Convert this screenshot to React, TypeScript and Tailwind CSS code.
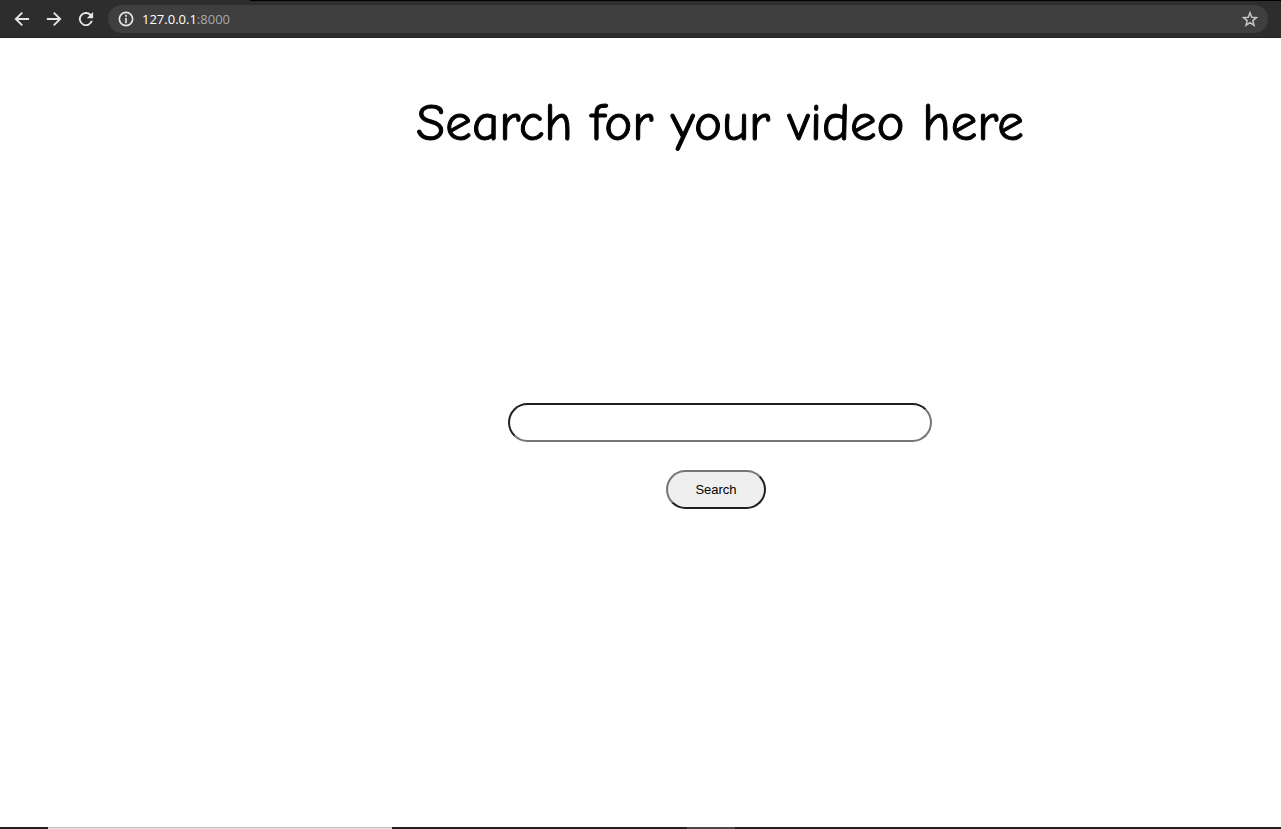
import { useState } from "react";
import type { ReactNode } from "react";

function Icon({ children }: { children: ReactNode }) {
  return (
    <svg viewBox="0 0 24 24" className="size-5" fill="currentColor" aria-hidden="true">
      {children}
    </svg>
  );
}

function BrowserBar() {
  const [address, setAddress] = useState("");
  return (
    <header className="bg-[#2d2d2d] text-[#e6e6e6]">
      <div className="flex h-px bg-black">
        <div className="w-[250px] bg-[#2d2d2d]" />
      </div>
      <div className="flex h-[37px] items-center border-b border-[#232323] pr-[13px] pl-3">
        <nav className="flex gap-3">
          <button type="button" aria-label="Back">
            <Icon>
              <path d="M20.5 10.9H7.4l5.7-5.7L11.5 3.5 3 12l8.500 8.500 1.600-1.700-5.700-5.700H20.500z" />
            </Icon>
          </button>
          <button type="button" aria-label="Forward">
            <Icon>
              <path d="M3.500 10.900H16.600l-5.700-5.700L12.500 3.500 21 12l-8.500 8.500-1.600-1.700 5.700-5.700H3.500z" />
            </Icon>
          </button>
          <button type="button" aria-label="Reload">
            <Icon>
              <path d="M18 6A8.500 8.500 0 1 0 20.200 14.200H17.800A6.200 6.200 0 1 1 16.300 7.700L13 11H20.500V3.500z" />
            </Icon>
          </button>
        </nav>
        <div className="ml-3 flex h-7 flex-1 items-center rounded-full bg-[#3f3f3f] px-2">
          <button type="button" aria-label="Site information">
            <Icon>
              <path d="M11 10.800h2v6.200h-2zM11 7h2v2.200h-2z" />
              <circle cx="12" cy="12" r="8" fill="none" stroke="currentColor" strokeWidth="2" />
            </Icon>
          </button>
          <label className="relative ml-1.5 flex flex-1 items-center font-['Open_Sans','Noto_Sans',sans-serif] text-[13px] leading-5">
            {address === "" && (
              <span className="pointer-events-none absolute left-0 text-[#a8a8a8]">
                <span className="text-white">127.0.0.1</span>:8000
              </span>
            )}
            <input
              type="text"
              aria-label="Address"
              value={address}
              onChange={(event) => setAddress(event.target.value)}
              className="w-full bg-transparent text-white outline-none"
            />
          </label>
          <button type="button" aria-label="Bookmark this page" className="text-[#c4c4c4]">
            <Icon>
              <path
                d="M12 4.500l2.100 5.300 5.700.4-4.400 3.700 1.400 5.600-4.800-3.100-4.800 3.100 1.400-5.600-4.400-3.700 5.700-.4z"
                fill="none"
                stroke="currentColor"
                strokeWidth="1.800"
              />
            </Icon>
          </button>
        </div>
      </div>
    </header>
  );
}

export default function App() {
  return (
    <div className="flex min-h-screen flex-col bg-white">
      <BrowserBar />
      <main className="flex flex-1 flex-col items-center pt-12 pl-[159px]">
        <h1 className="text-center font-['Comic_Sans_MS','Comic_Neue',cursive] text-[53px] leading-[74px] font-normal text-black [-webkit-text-stroke:1px_black]">
          Search for your video here
        </h1>
        <form
          onSubmit={(event) => event.preventDefault()}
          className="mt-[243px] flex flex-col items-center gap-7"
        >
          <input
            type="search"
            aria-label="Search for your video"
            className="h-[39px] w-[424px] appearance-none rounded-[20px] border-2 border-t-[#202020] border-r-[#767676] border-b-[#767676] border-l-[#202020] bg-white px-4 text-sm outline-none"
          />
          <button
            type="submit"
            className="mr-2 h-[39px] w-[100px] rounded-[20px] border-2 border-t-[#767676] border-r-[#202020] border-b-[#202020] border-l-[#767676] bg-[#efefef] font-['Liberation_Sans',sans-serif] text-[13px] text-black"
          >
            Search
          </button>
        </form>
      </main>
      <footer className="flex h-0.5 bg-[#202020]">
        <div className="w-12" />
        <div className="w-[344px] border-t border-[#bdbdbd] bg-[#e4e4e4]" />
        <div className="ml-[295px] w-12 bg-[#484848]" />
      </footer>
    </div>
  );
}
